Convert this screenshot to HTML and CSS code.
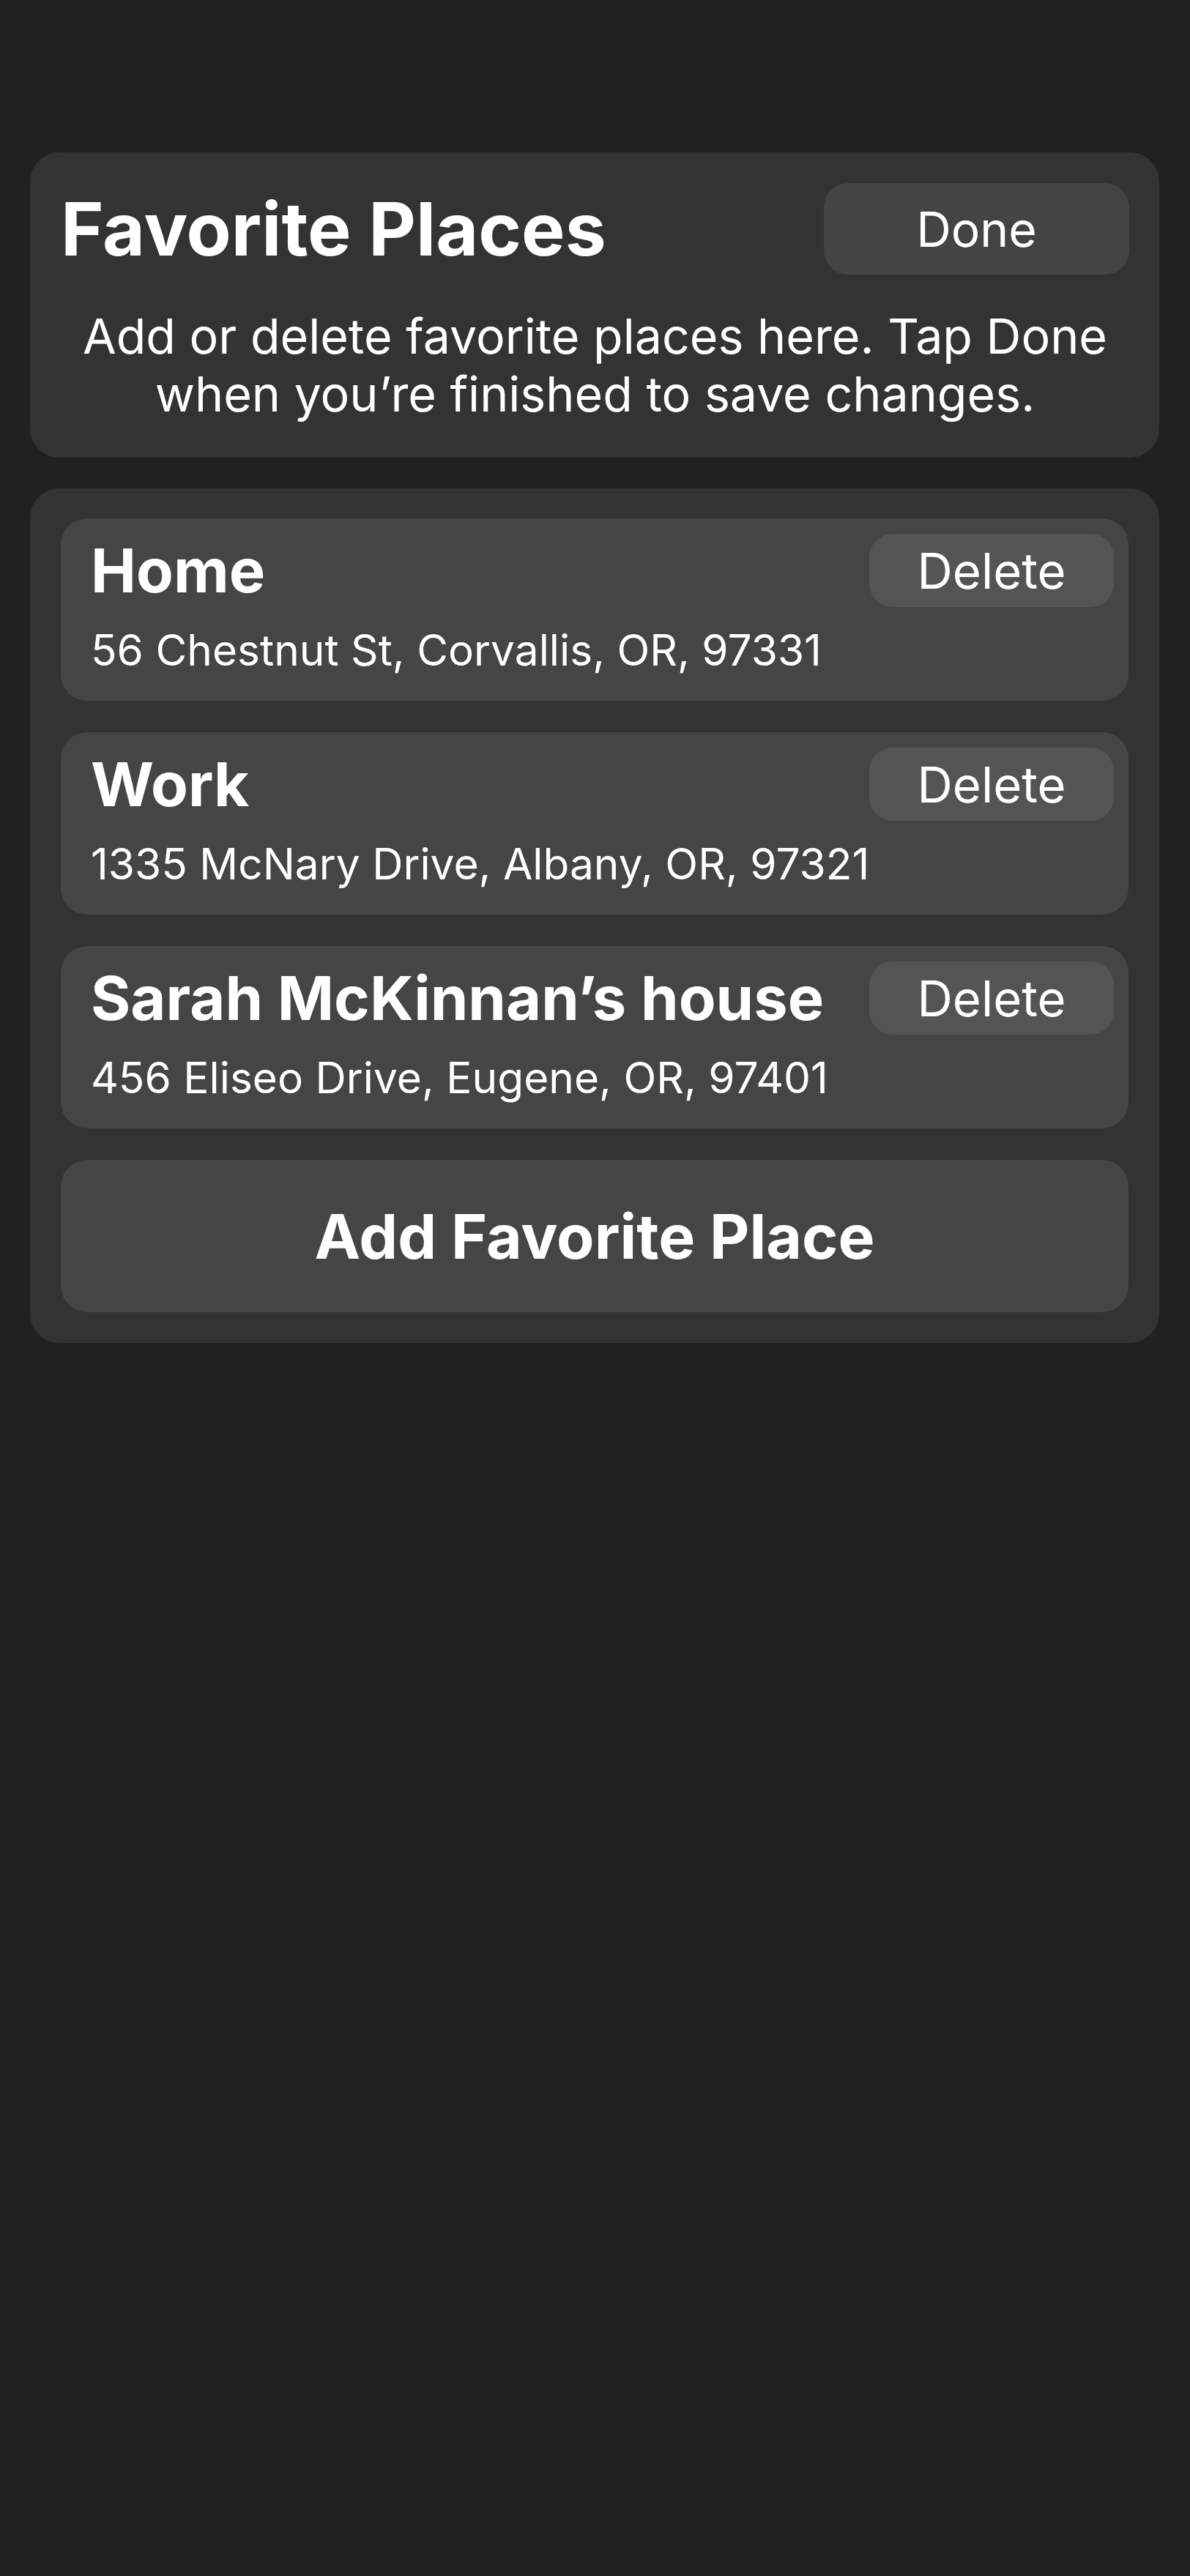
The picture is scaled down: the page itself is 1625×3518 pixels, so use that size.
FILE: index.html
```html
<!DOCTYPE html>
<html lang="en">
<head>
<meta charset="utf-8">
<title>Favorite Places</title>
<link rel="stylesheet" href="styles.css">
</head>
<body>
<main class="screen">
  <section class="card header-card">
    <div class="header-row">
      <h1 class="title">Favorite Places</h1>
      <button class="btn btn-done">Done</button>
    </div>
    <p class="desc">Add or delete favorite places here. Tap Done when you’re finished to save changes.</p>
  </section>

  <section class="card list-card">
    <div class="place">
      <div class="place-row">
        <h2 class="place-name">Home</h2>
        <button class="btn btn-delete">Delete</button>
      </div>
      <p class="place-addr">56 Chestnut St, Corvallis, OR, 97331</p>
    </div>
    <div class="place">
      <div class="place-row">
        <h2 class="place-name">Work</h2>
        <button class="btn btn-delete">Delete</button>
      </div>
      <p class="place-addr">1335 McNary Drive, Albany, OR, 97321</p>
    </div>
    <div class="place">
      <div class="place-row">
        <h2 class="place-name">Sarah McKinnan’s house</h2>
        <button class="btn btn-delete">Delete</button>
      </div>
      <p class="place-addr">456 Eliseo Drive, Eugene, OR, 97401</p>
    </div>
    <button class="btn btn-add">Add Favorite Place</button>
  </section>
</main>
</body>
</html>
```

FILE: styles.css
```css
* {
  box-sizing: border-box;
}

html, body {
  margin: 0;
  padding: 0;
  background: #212121;
}

body {
  font-family: Inter, "Noto Sans", "Liberation Sans", sans-serif;
  color: #ffffff;
  min-height: 3518px;
}

.screen {
  display: flex;
  flex-direction: column;
  gap: 42px;
  padding: 208px 42px 0 41px;
}

.card {
  background: #333333;
  border-radius: 40px;
}

.header-card {
  padding: 42px 41px 47px 42px;
}

.header-row {
  display: flex;
  align-items: center;
  justify-content: space-between;
  height: 125px;
}

.title {
  margin: 0;
  font-size: 100px;
  font-weight: 700;
  line-height: 125px;
  letter-spacing: 0;
}

.btn {
  font-family: inherit;
  color: #ffffff;
  border: none;
  cursor: pointer;
  padding: 0;
}

.btn-done {
  width: 417px;
  height: 125px;
  border-radius: 33px;
  background: #444444;
  font-size: 66px;
  font-weight: 400;
}

.desc {
  margin: 45px 0 0;
  font-size: 66.3px;
  line-height: 79px;
  text-align: center;
  font-weight: 400;
}

.list-card {
  display: flex;
  flex-direction: column;
  gap: 43px;
  padding: 41px 42px 42px 42px;
}

.place {
  height: 249px;
  background: #454545;
  border-radius: 36px;
  padding: 21px 20px 0 41px;
}

.place-row {
  display: flex;
  align-items: center;
  justify-content: space-between;
  height: 100px;
}

.place-name {
  margin: 0;
  font-size: 83px;
  font-weight: 700;
  line-height: 100px;
  white-space: nowrap;
}

.btn-delete {
  width: 334px;
  height: 100px;
  flex: none;
  border-radius: 32px;
  background: #545454;
  font-size: 67px;
  font-weight: 400;
}

.place-addr {
  margin: 24px 0 0;
  font-size: 58.6px;
  line-height: 70px;
  font-weight: 400;
}

.btn-add {
  height: 208px;
  border-radius: 36px;
  background: #454545;
  font-size: 84px;
  font-weight: 700;
}
```
